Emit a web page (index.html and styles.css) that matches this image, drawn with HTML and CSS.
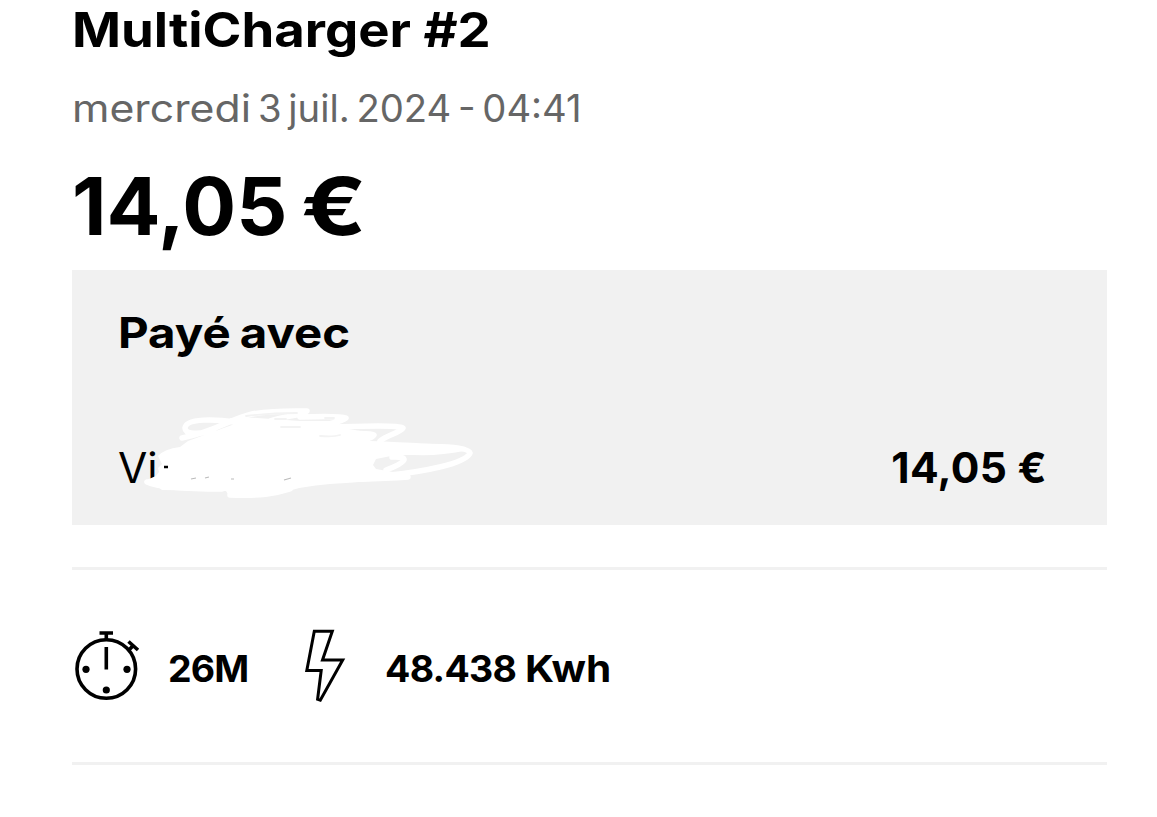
FILE: index.html
```html
<!DOCTYPE HTML>
<html lang="fr">
<head>
	<meta charset="utf-8" />
	<title>MultiCharger #2</title>
	<link rel="stylesheet" href="styles.css">
</head>
<body>
	<div class="receipt">
		<h1>MultiCharger #2</h1>
		<p class="date"><span class="day">mercredi</span><span class="time">3 juil. 2024 - 04:41</span></p>
		<p class="total">14,05 <span class="euro">€</span></p>
		<div class="payment">
			<h2>Payé avec</h2>
			<div class="row">
				<span class="card">Vi</span>
				<span class="amount">14,05 €</span>
			</div>
			<svg class="scribble" width="360" height="105" viewBox="130 400 360 105">
				<path class="fill" d="M144 481L156 476L159 472L158 468L162 464L158 456Q164 449 180 447L188 441L210 433L232 425L242 417L300 421L330 421L326 425L372 433L370 441Q430 443 466 447L464 451Q440 456 414 455L396 455L376 459L373 465L376 469L410 475L409 478Q360 482 330 484Q300 486 280 494L229 496L226 491L162 490L158 487L148 484Z" />
				<path class="stroke" d="M182 438C215 432 230 419 252 414C275 410 297 411 307 411C304 415 285 416 270 421M236 422C215 419 186 418 185 428C185 435 200 434 214 431M300 417C325 416 341 416 346 418C342 422 325 424 310 429M335 427C365 426 398 425 403 428C401 432 386 436 380 441M340 434C358 433 372 433 374 435C372 439 360 440 350 443M376 448C425 446 468 445 470 453C466 464 420 472 390 475M392 457C412 456 405 463 386 470M147 482C160 488 190 489 222 489M230 495C260 496 275 494 290 489M300 480C340 480 380 479 408 477" />
				<path class="gap" d="M246 416Q270 413 297 413M325 418H334M275 419H286M281 427H300M320 436Q334 437 340 435" />
				<path class="speck" d="M191 479L196 478M205 478L209 477M231 479H234M284 480L291 478" />
				<path class="mark" d="M164 467H168" />
			</svg>
		</div>
		<div class="stats">
			<svg class="timer" width="68" height="74" viewBox="72 629 68 74">
				<circle cx="106.3" cy="669" r="29.3" />
				<path d="M99.5 633H113M106.3 633V640M106.3 647V669.5M128.5 641.5L138 650M133.2 645.5L128.5 650.5" />
				<g class="dots">
					<circle cx="86" cy="669.3" r="3.6" />
					<circle cx="127" cy="669.3" r="3.6" />
					<circle cx="106.3" cy="690" r="3.6" />
				</g>
			</svg>
			<span class="duration">26M</span>
			<svg class="bolt" width="42" height="76" viewBox="304 628 42 76">
				<path d="M314.3 631.3H332.3L322.5 660H342.7L320.3 700.2L317.6 699.3L321.2 670.5H306.8Z" />
			</svg>
			<span class="energy">48.438 <span class="unit">Kwh</span></span>
		</div>
	</div>
</body>
</html>
```
FILE: styles.css
```css
body {
	background-color: #fff;
	color: #000;
	font-family: Inter, "Liberation Sans", sans-serif;
	margin: 0;
	padding: 0;
}
h1,
h2,
p {
	margin: 0;
	white-space: nowrap;
}
/* widened lettering */
h1,
h2,
.day,
.time,
.euro,
.unit {
	display: inline-block;
	transform-origin: left;
}
h1 {
	display: block;
	font-size: 48px;
	font-weight: 700;
	line-height: 59px;
	transform: scaleX(1.097);
}
h2 {
	display: block;
	font-size: 42.5px;
	font-weight: 700;
	line-height: 50px;
	transform: scaleX(1.115);
	word-spacing: -2px;
}
.receipt {
	margin-left: 72px;
	width: 1035px;
}
.date {
	color: #666;
	font-size: 37.5px;
	line-height: 48px;
	margin-top: 26px;
}
.day {
	margin-right: 29px;
	transform: scaleX(1.14);
}
.time {
	transform: scaleX(1.02);
	word-spacing: -4px;
}
.total {
	font-size: 80px;
	font-weight: 700;
	line-height: 96px;
	margin-top: 25px;
	word-spacing: -5px;
}
.euro {
	transform: scaleX(1.2);
}
.payment {
	background-color: #f1f1f1;
	box-sizing: border-box;
	height: 255px;
	margin-top: 16px;
	padding: 38px 60px 0 46px;
	position: relative;
}
.row {
	display: flex;
	font-size: 42.5px;
	justify-content: space-between;
	line-height: 50px;
	margin-top: 85px;
}
.card {
	font-weight: 400;
}
.amount {
	font-weight: 700;
	letter-spacing: .3px;
}

/* hides the card number */
.scribble {
	left: 58px;
	position: absolute;
	top: 130px;
}
.scribble .fill {
	fill: #fff;
}
.scribble .stroke {
	fill: none;
	stroke: #fff;
	stroke-linecap: round;
	stroke-linejoin: round;
	stroke-width: 5.5;
}
.scribble .gap {
	fill: none;
	stroke: #f3f3f3;
	stroke-linecap: round;
	stroke-width: 1.8;
}
.scribble .speck {
	stroke: #bbb;
	stroke-width: 1.2;
}
.scribble .mark {
	stroke: #000;
	stroke-width: 2.5;
}

.stats {
	align-items: center;
	border-bottom: 3px solid #f1f1f1;
	border-top: 3px solid #f1f1f1;
	box-sizing: border-box;
	display: flex;
	font-size: 37.5px;
	font-weight: 700;
	height: 198px;
	line-height: 48px;
	margin-top: 42px;
}
.timer,
.bolt {
	fill: none;
	flex: none;
	stroke: #000;
	stroke-width: 3.6;
}
.bolt {
	stroke-width: 3;
}
.dots {
	fill: #000;
	stroke: none;
}
.duration,
.energy {
	padding-top: 6px;
	white-space: nowrap;
}
.duration {
	letter-spacing: -.8px;
	margin-left: 28px;
	width: 136px;
}
.energy {
	letter-spacing: -.7px;
	margin-left: 39px;
	word-spacing: 1px;
}
.unit {
	letter-spacing: 0;
	transform: scaleX(1.08);
}
```
